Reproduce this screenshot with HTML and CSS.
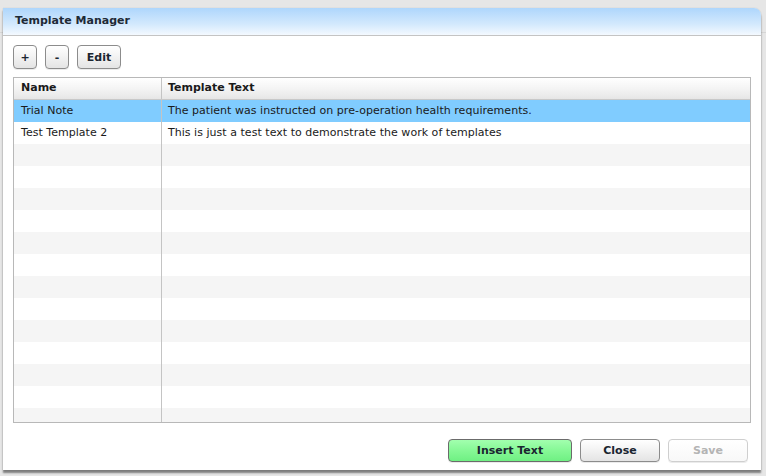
FILE: index.html
```html
<!DOCTYPE html>
<html lang="en">
<head>
    <meta charset="UTF-8">
    <title>Template Manager</title>
    <link rel="stylesheet" href="styles.css">
</head>
<body>
    <div class="backdrop-line"></div>
    <div class="dialog">
        <div class="dialog-header">Template Manager</div>
        <div class="dialog-body">
            <div class="toolbar">
                <button class="btn btn-small">+</button>
                <button class="btn btn-small">-</button>
                <button class="btn btn-edit">Edit</button>
            </div>

            <div class="grid">
                <div class="grid-head">
                    <div class="cell col-name">Name</div>
                    <div class="cell col-text">Template Text</div>
                </div>
                <div class="grid-rows">
                    <div class="row selected">
                        <div class="cell col-name">Trial Note</div>
                        <div class="cell col-text">The patient was instructed on pre-operation health requirements.</div>
                    </div>
                    <div class="row">
                        <div class="cell col-name">Test Template 2</div>
                        <div class="cell col-text">This is just a test text to demonstrate the work of templates</div>
                    </div>
                    <div class="row"><div class="cell col-name"></div><div class="cell col-text"></div></div>
                    <div class="row"><div class="cell col-name"></div><div class="cell col-text"></div></div>
                    <div class="row"><div class="cell col-name"></div><div class="cell col-text"></div></div>
                    <div class="row"><div class="cell col-name"></div><div class="cell col-text"></div></div>
                    <div class="row"><div class="cell col-name"></div><div class="cell col-text"></div></div>
                    <div class="row"><div class="cell col-name"></div><div class="cell col-text"></div></div>
                    <div class="row"><div class="cell col-name"></div><div class="cell col-text"></div></div>
                    <div class="row"><div class="cell col-name"></div><div class="cell col-text"></div></div>
                    <div class="row"><div class="cell col-name"></div><div class="cell col-text"></div></div>
                    <div class="row"><div class="cell col-name"></div><div class="cell col-text"></div></div>
                    <div class="row"><div class="cell col-name"></div><div class="cell col-text"></div></div>
                    <div class="row"><div class="cell col-name"></div><div class="cell col-text"></div></div>
                    <div class="row"><div class="cell col-name"></div><div class="cell col-text"></div></div>
                    <div class="row"><div class="cell col-name"></div><div class="cell col-text"></div></div>
                </div>
            </div>

            <div class="actions">
                <button class="btn btn-insert">Insert Text</button>
                <button class="btn btn-action">Close</button>
                <button class="btn btn-action" disabled>Save</button>
            </div>
        </div>
    </div>
</body>
</html>
```

FILE: styles.css
```css
* {
    margin: 0;
    padding: 0;
    box-sizing: border-box;
}

body {
    font-family: "DejaVu Sans", Verdana, sans-serif;
    font-size: 11px;
    color: #1a1a1a;
    background: #e6e6e6;
    width: 766px;
    height: 476px;
    overflow: hidden;
    padding: 8px 5px 0 3px;
    position: relative;
}

.backdrop-line {
    position: absolute;
    left: 0;
    right: 0;
    top: 32px;
    border-top: 1px solid #d6d6d6;
}

.dialog {
    position: relative;
    width: 758px;
    height: 462px;
    background: #fff;
    border-radius: 0 7px 0 0;
    box-shadow: 0 3px 2px rgba(0, 0, 0, 0.45), 0 0 1px rgba(0, 0, 0, 0.25);
    display: flex;
    flex-direction: column;
}

.dialog-header {
    height: 28px;
    padding: 0 12px;
    line-height: 26px;
    font-weight: bold;
    font-size: 11px;
    color: #1e2a36;
    background: linear-gradient(to bottom, #aed6fc 0%, #d3e9fd 60%, #f4f9ff 100%);
    border-bottom: 1px solid #c4c4c4;
    border-radius: 0 7px 0 0;
}

.dialog-body {
    flex: 1;
    padding: 9px 10px 0 10px;
    display: flex;
    flex-direction: column;
}

.btn {
    font-family: "DejaVu Sans", Verdana, sans-serif;
    font-size: 11px;
    font-weight: bold;
    color: #1a2530;
    height: 23px;
    border: 1px solid #8c8c8c;
    border-radius: 4px;
    background: linear-gradient(to bottom, #ffffff 0%, #f2f2f2 50%, #e4e4e4 100%);
    box-shadow: 0 1px 0 rgba(0, 0, 0, 0.08);
}

.toolbar {
    display: flex;
    gap: 8px;
    height: 24px;
}

.btn-small {
    width: 24px;
    height: 24px;
}

.btn-edit {
    width: 44px;
    height: 24px;
}

.grid {
    margin-top: 8px;
    height: 346px;
    border: 1px solid #b8b8b8;
    display: flex;
    flex-direction: column;
    overflow: hidden;
}

.grid-head {
    display: flex;
    height: 22px;
    flex-shrink: 0;
    background: linear-gradient(to bottom, #ffffff 0%, #f3f3f3 55%, #e6e6e6 100%);
    border-bottom: 1px solid #c8c8c8;
    font-weight: bold;
}

.grid-rows {
    flex: 1;
    overflow: hidden;
}

.row {
    display: flex;
    height: 22px;
    background: #fff;
}

.row:nth-child(odd) {
    background: #f5f5f5;
}

.row.selected {
    background: #80ccff;
}

.cell {
    line-height: 21px;
    padding-left: 7px;
    letter-spacing: 0.03px;
    white-space: nowrap;
    overflow: hidden;
}

.grid-head .cell {
    letter-spacing: 0;
    line-height: 20px;
}

.col-name {
    width: 148px;
    flex-shrink: 0;
    border-right: 1px solid #c4c4c4;
}

.col-text {
    flex: 1;
    padding-left: 6px;
}

.actions {
    display: flex;
    justify-content: flex-end;
    gap: 8px;
    margin-top: 16px;
    padding-right: 3px;
}

.btn-insert {
    width: 124px;
    border-color: #6b6b6b;
    background: linear-gradient(to bottom, #a2ffae 0%, #86f896 50%, #6ff083 100%);
}

.btn-action {
    width: 80px;
}

.btn-action:disabled {
    color: #b4b4b4;
    border-color: #cfcfcf;
    background: linear-gradient(to bottom, #ffffff 0%, #f8f8f8 100%);
}
```
